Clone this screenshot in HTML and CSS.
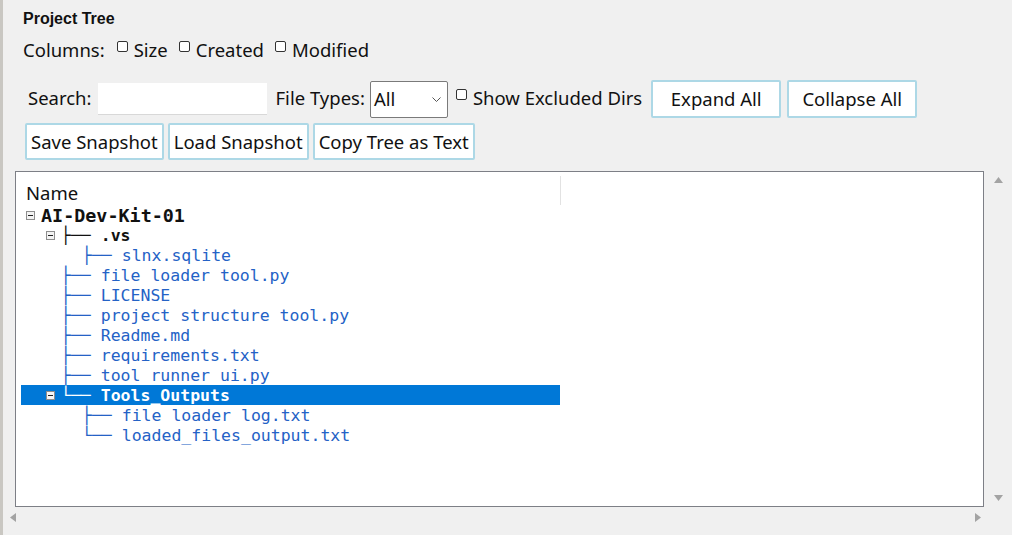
FILE: index.html
```html
<!DOCTYPE html>
<html>
<head>
<meta charset="utf-8">
<link rel="stylesheet" href="styles.css">
</head>
<body>
<div class="app">
  <div class="title">Project Tree</div>
  <div class="columns">
    <span class="lbl">Columns:</span>
    <label class="chk"><input type="checkbox">Size</label>
    <label class="chk"><input type="checkbox">Created</label>
    <label class="chk"><input type="checkbox">Modified</label>
  </div>
  <div class="toolbar">
    <span class="lbl">Search:</span>
    <input class="search" type="text">
    <span class="lbl">File Types:</span>
    <div class="select"><span>All</span><svg width="9" height="6" viewBox="0 0 9 6"><path d="M0.5 0.5 L4.5 4.5 L8.5 0.5" fill="none" stroke="#555" stroke-width="1"/></svg></div>
    <label class="chk"><input type="checkbox">Show Excluded Dirs</label>
    <button class="btn wide">Expand All</button>
    <button class="btn wide">Collapse All</button>
  </div>
  <div class="toolbar2">
    <button class="btn">Save Snapshot</button>
    <button class="btn">Load Snapshot</button>
    <button class="btn">Copy Tree as Text</button>
  </div>
  <div class="treearea">
    <div class="treemain">
      <div class="tree">
        <div class="header"><span class="hname">Name</span></div>
        <div class="row root"><span class="exp"></span><span class="t">AI-Dev-Kit-01</span></div>
        <div class="row l1 dir"><span class="exp"></span><span class="t">├── .vs</span></div>
        <div class="row l2 file"><span class="t">├── slnx.sqlite</span></div>
        <div class="row l1 file"><span class="t">├── file loader tool.py</span></div>
        <div class="row l1 file"><span class="t">├── LICENSE</span></div>
        <div class="row l1 file"><span class="t">├── project structure tool.py</span></div>
        <div class="row l1 file"><span class="t">├── Readme.md</span></div>
        <div class="row l1 file"><span class="t">├── requirements.txt</span></div>
        <div class="row l1 file"><span class="t">├── tool runner ui.py</span></div>
        <div class="row l1 dir sel"><span class="exp"></span><span class="t">└── Tools_Outputs</span></div>
        <div class="row l2 file"><span class="t">├── file loader log.txt</span></div>
        <div class="row l2 file"><span class="t">└── loaded_files_output.txt</span></div>
      </div>
      <div class="vscroll">
        <svg width="9" height="6" viewBox="0 0 9 6"><path d="M4.5 0 L9 6 L0 6 Z" fill="#a3a3a3"/></svg>
        <svg width="9" height="6" viewBox="0 0 9 6"><path d="M0 0 L9 0 L4.5 6 Z" fill="#a3a3a3"/></svg>
      </div>
    </div>
    <div class="hscroll">
      <svg width="6" height="9" viewBox="0 0 6 9"><path d="M6 0 L6 9 L0 4.5 Z" fill="#a3a3a3"/></svg>
      <svg width="6" height="9" viewBox="0 0 6 9"><path d="M0 0 L6 4.5 L0 9 Z" fill="#a3a3a3"/></svg>
    </div>
  </div>
</div>
</body>
</html>
```
FILE: styles.css
```css
html, body {
  margin: 0;
  padding: 0;
  background: #f0f0f0;
}
body {
  width: 1012px;
  height: 535px;
  overflow: hidden;
}
.app {
  border-left: 3px solid #c9c7c2;
  height: 535px;
  box-sizing: border-box;
  padding-top: 8px;
  font-family: "Noto Sans", "Open Sans", sans-serif;
  font-size: 18.5px;
  color: #111;
}
.title {
  font-family: "Liberation Sans", Arial, sans-serif;
  font-weight: bold;
  font-size: 16px;
  line-height: 22px;
  height: 22px;
  padding-left: 20px;
}
.columns {
  margin-top: 6px;
  height: 26px;
  display: flex;
  align-items: center;
  padding-left: 20px;
}
.columns .lbl {
  margin-right: 12px;
}
.chk {
  display: flex;
  align-items: center;
  margin-right: 11px;
}
.chk input {
  appearance: none;
  -webkit-appearance: none;
  width: 11px;
  height: 11px;
  margin: -6px 6px 0 0;
  border: 1px solid #333;
  border-radius: 2px;
  background: #fff;
  box-sizing: border-box;
}
.toolbar {
  margin-top: 18px;
  height: 38px;
  display: flex;
  align-items: center;
  padding-left: 25px;
}
.toolbar .lbl {
  margin-right: 5px;
  margin-bottom: 3px;
}
.toolbar .chk {
  margin-right: 9px;
  margin-bottom: 3px;
}
.search {
  width: 169px;
  height: 32px;
  box-sizing: border-box;
  border: none;
  border-bottom: 1px solid #d8d8d8;
  background: #fff;
  margin: 0 9px 0 1px;
  padding: 0;
}
.select {
  width: 78px;
  height: 37px;
  box-sizing: border-box;
  border: 1px solid #7a7a7a;
  border-radius: 2px;
  background: #fff;
  display: flex;
  align-items: center;
  justify-content: space-between;
  padding: 0 6px 2px 3px;
  margin-right: 8px;
}
.select svg {
  margin-top: 3px;
}
.btn {
  font-family: "Noto Sans", "Open Sans", sans-serif;
  font-size: 18.5px;
  color: #111;
  background: #fff;
  border: 2px solid #add8e6;
  border-radius: 2px;
  height: 38px;
  padding: 0 4px 1px;
  margin: 0 5px 0 0;
  box-sizing: border-box;
}
.btn.wide {
  width: 130px;
  margin-right: 6px;
}
.toolbar2 {
  margin-top: 5px;
  height: 37px;
  display: flex;
  align-items: center;
  padding-left: 22px;
}
.toolbar2 .btn {
  height: 37px;
  margin-right: 4px;
}
.treearea {
  margin-top: 11px;
}
.treemain {
  display: flex;
  padding-left: 12px;
}
.tree {
  width: 969px;
  height: 336px;
  box-sizing: border-box;
  border: 1px solid #7d7f86;
  background: #fff;
  padding-left: 5px;
}
.header {
  width: 540px;
  display: flex;
  align-items: center;
  border-right: 1px solid #e2e2e2;
  box-sizing: border-box;
  margin-top: 4px;
  height: 29px;
  margin-bottom: 0;
}
.hname {
  padding-left: 5px;
  padding-top: 4px;
}
.row {
  width: 539px;
  box-sizing: border-box;
  height: 20px;
  display: flex;
  align-items: center;
  font-family: "DejaVu Sans Mono", monospace;
  font-size: 16.5px;
  white-space: pre;
  color: #111;
}
.row .t {
  line-height: 20px;
  padding-top: 1px;
}
.exp {
  width: 9px;
  height: 9px;
  box-sizing: border-box;
  border: 1px solid #8e8e8e;
  background: #f3f3f3;
  margin: 0 6px 0 5px;
  display: flex;
  align-items: center;
  justify-content: center;
}
.exp::after {
  content: "";
  width: 5px;
  height: 1px;
  background: #222;
}
.root {
  padding-left: 0;
  font-weight: bold;
  font-size: 18.4px;
}
.l1 {
  padding-left: 20px;
}
.l1.file {
  padding-left: 40px;
}
.l2 {
  padding-left: 61px;
}
.dir {
  font-weight: bold;
}
.file {
  color: #2462c6;
}
.sel {
  background: #0078d7;
  color: #fff;
}
.sel .exp {
  background: #f6f6f6;
}
.vscroll {
  width: 28px;
  height: 336px;
  display: flex;
  flex-direction: column;
  align-items: center;
  justify-content: space-between;
  padding: 6px 0 6px;
  box-sizing: border-box;
}
.hscroll {
  height: 20px;
  display: flex;
  align-items: center;
  justify-content: space-between;
  padding: 0 31px 0 7px;
}
```
